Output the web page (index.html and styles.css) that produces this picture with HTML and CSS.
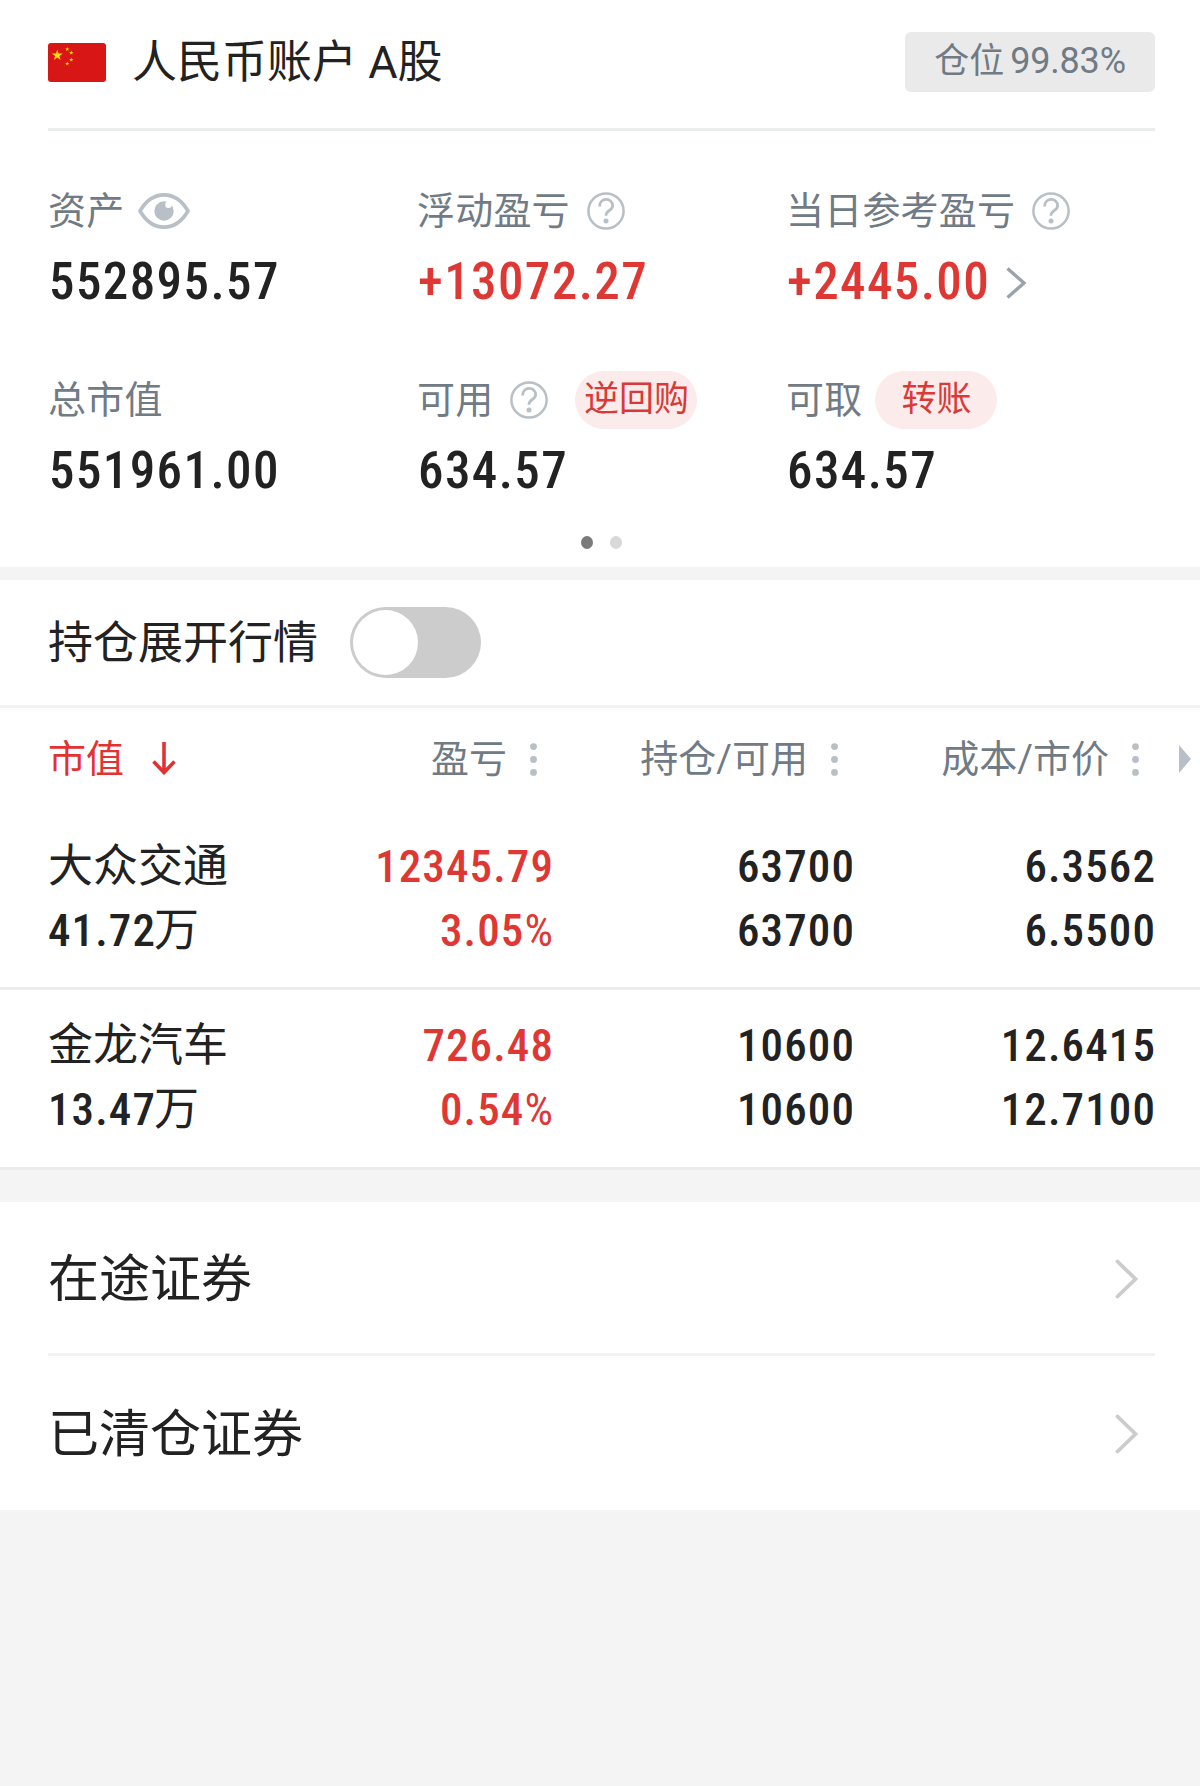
FILE: index.html
```html
<!DOCTYPE html>
<html lang="zh-CN">

<head>
    <meta charset="UTF-8">
    <meta name="viewport" content="width=device-width, initial-scale=1.0">
    <title>持仓</title>
    <link rel="stylesheet" href="styles.css">
</head>

<body>
    <!-- 图标 -->
    <svg class="sprite" width="0" height="0">
        <symbol id="help" viewBox="0 0 38 38">
            <circle cx="19" cy="19" r="17.6" fill="none" stroke="currentColor" stroke-width="2.5" />
            <path d="M12.6 14.5 C12.6 5.2 25.6 5.2 25.6 13.8 C25.6 19 19 17.5 19 23.8" fill="none" stroke="currentColor" stroke-width="2.8" />
            <circle cx="19" cy="29" r="2.5" fill="currentColor" />
        </symbol>
        <symbol id="arrow" viewBox="0 0 24 40">
            <path d="M2.5 2.5 L20.5 20 L2.5 37.5" fill="none" stroke="currentColor" stroke-width="3.8" stroke-linecap="round" />
        </symbol>
        <symbol id="more" viewBox="0 0 7 33">
            <circle cx="3.5" cy="3.6" r="3.4" fill="currentColor" />
            <circle cx="3.5" cy="16.5" r="3.4" fill="currentColor" />
            <circle cx="3.5" cy="29.4" r="3.4" fill="currentColor" />
        </symbol>
        <symbol id="star" viewBox="0 0 20 20">
            <path d="M10 0 L12.3 6.9 L19.5 6.9 L13.7 11.2 L15.9 18.1 L10 13.8 L4.1 18.1 L6.3 11.2 L.5 6.9 L7.7 6.9 Z" fill="#ffde00" />
        </symbol>
    </svg>

    <!-- 账户资产 -->
    <section class="account">
        <div class="account-header">
            <svg class="flag" viewBox="0 0 58 39">
                <rect width="58" height="39" rx="3" fill="#d91616" />
                <use href="#star" x="3.5" y="6.5" width="11.5" height="11.5" />
                <use href="#star" x="17" y="4" width="4.5" height="4.5" />
                <use href="#star" x="21" y="7.5" width="4.5" height="4.5" />
                <use href="#star" x="21" y="14.5" width="4.5" height="4.5" />
                <use href="#star" x="17" y="18.5" width="4.5" height="4.5" />
            </svg>
            <h1>人民币账户 A股</h1>
            <span class="position">仓位<span class="percent">99.83%</span></span>
        </div>

        <div class="assets">
            <div class="asset">
                <div class="label">资产
                    <svg class="eye" viewBox="0 0 52 36">
                        <path d="M2 18 C14.5 -3.5 37.5 -3.5 50 18 C37.5 39.5 14.5 39.5 2 18 Z" fill="none" stroke="currentColor" stroke-width="3.6" stroke-linejoin="round" />
                        <circle cx="26" cy="18" r="9.7" fill="currentColor" />
                        <circle cx="30.5" cy="11.8" r="3.3" fill="#fff" />
                    </svg>
                </div>
                <div class="value">552895.57</div>
            </div>
            <div class="asset">
                <div class="label">浮动盈亏<svg class="help"><use href="#help" /></svg></div>
                <div class="value red">+13072.27</div>
            </div>
            <div class="asset">
                <div class="label">当日参考盈亏<svg class="help"><use href="#help" /></svg></div>
                <div class="value red">+2445.00<svg class="detail" viewBox="0 0 21 32"><path d="M1.5 1.5 L18 16 L1.5 30.5" fill="none" stroke="currentColor" stroke-width="3.4" /></svg></div>
            </div>
            <div class="asset">
                <div class="label">总市值</div>
                <div class="value">551961.00</div>
            </div>
            <div class="asset">
                <div class="label">可用<svg class="help"><use href="#help" /></svg><button class="pill repo">逆回购</button></div>
                <div class="value">634.57</div>
            </div>
            <div class="asset">
                <div class="label">可取<button class="pill">转账</button></div>
                <div class="value">634.57</div>
            </div>
        </div>

        <div class="dots">
            <span class="dot active"></span>
            <span class="dot"></span>
        </div>
    </section>

    <!-- 持仓列表 -->
    <section class="holdings">
        <div class="expand">
            <span class="expand-text">持仓展开行情</span>
            <span class="toggle"><span class="knob"></span></span>
        </div>

        <div class="row head">
            <div class="sorted">市值
                <svg class="down" viewBox="0 0 24 33">
                    <path d="M12 0 V30 M1.5 19.5 L12 30.5 L22.5 19.5" fill="none" stroke="currentColor" stroke-width="3.6" />
                </svg>
            </div>
            <div>盈亏<svg class="more"><use href="#more" /></svg></div>
            <div>持仓/可用<svg class="more"><use href="#more" /></svg></div>
            <div>成本/市价<svg class="more"><use href="#more" /></svg></div>
            <svg class="next" viewBox="0 0 12 28"><path d="M0 0 L12 14 L0 28 Z" fill="currentColor" /></svg>
        </div>

        <div class="row">
            <div class="name">大众交通<br><span class="num">41.72</span>万</div>
            <div class="num red">12345.79<br>3.05<span class="sign">%</span></div>
            <div class="num">63700<br>63700</div>
            <div class="num">6.3562<br>6.5500</div>
        </div>
        <div class="row last">
            <div class="name">金龙汽车<br><span class="num">13.47</span>万</div>
            <div class="num red">726.48<br>0.54<span class="sign">%</span></div>
            <div class="num">10600<br>10600</div>
            <div class="num">12.6415<br>12.7100</div>
        </div>
    </section>

    <!-- 更多 -->
    <section class="links">
        <a class="link" href="#"><span>在途证券</span><svg class="go"><use href="#arrow" /></svg></a>
        <a class="link" href="#"><span>已清仓证券</span><svg class="go"><use href="#arrow" /></svg></a>
    </section>
</body>

</html>
```
FILE: styles.css
```css
* {
    box-sizing: border-box;
}

body {
    margin: 0;
    background-color: #f4f4f4;
    color: #222;
    font-family: Roboto, "Noto Sans CJK SC", sans-serif;
    font-size: 45px;
}

svg {
    display: block;
    flex: none;
}

.sprite {
    position: absolute;
}

.red {
    color: #de3734;
}

.account {
    height: 567px;
    background-color: #fff;
}

.account-header {
    display: flex;
    align-items: center;
    height: 131px;
    margin: 0 45px 0 48px;
    padding: 32px 0 36px;
    border-bottom: 3px solid #ebeded;
}

.flag {
    width: 58px;
    height: 39px;
}

h1 {
    margin: 0 auto 0 26px;
    padding-top: 1px;
    font-size: 45px;
    font-weight: 400;
    line-height: 60px;
}

.position {
    display: flex;
    justify-content: center;
    gap: 6px;
    width: 250px;
    height: 60px;
    border-radius: 6px;
    background-color: #eaeaea;
    color: #707b85;
    font-size: 35px;
    line-height: 60px;
}

.percent {
    font-size: 36px;
    letter-spacing: -.2px;
    line-height: 58px;
}

.assets {
    display: grid;
    grid-template-columns: repeat(3, 369px);
    row-gap: 48px;
    padding: 51px 0 0 48px;
}

.label {
    display: flex;
    align-items: center;
    height: 58px;
    color: #707b85;
    font-size: 38px;
    letter-spacing: .2px;
    line-height: 56px;
}

.value {
    display: flex;
    align-items: center;
    height: 83px;
    padding-left: 1px;
    font-size: 51px;
    font-weight: 500;
    font-stretch: 75%;
    letter-spacing: 1.4px;
    line-height: 83px;
}

.eye {
    width: 52px;
    height: 36px;
    margin-left: 14px;
    color: #b8bfc6;
}

.help {
    width: 38px;
    height: 38px;
    margin-left: 17px;
    color: #b8bfc6;
}

.detail {
    width: 21px;
    height: 32px;
    margin: 3px 0 0 16px;
    color: #9aa3ab;
}

.pill {
    width: 122px;
    height: 58px;
    margin-left: 13px;
    padding: 0;
    border: none;
    border-radius: 29px;
    background-color: #fcebeb;
    color: #d93a38;
    font-family: inherit;
    font-size: 35px;
    line-height: 56px;
}

.repo {
    margin-left: 27px;
}

.dots {
    display: flex;
    justify-content: center;
    gap: 17px;
    margin-top: 24px;
    padding-left: 3px;
}

.dot {
    width: 12px;
    height: 13px;
    border-radius: 50%;
    background-color: #d8d8d8;
}

.dot.active {
    background-color: #7a7a7a;
}

.holdings {
    margin-top: 13px;
    background-color: #fff;
}

.expand {
    display: flex;
    align-items: center;
    gap: 32px;
    height: 128px;
    padding-left: 48px;
    border-bottom: 3px solid #f2f2f2;
}

.expand-text {
    padding-bottom: 6px;
}

.toggle {
    width: 131px;
    height: 71px;
    padding: 3px;
    border-radius: 36px;
    background-color: #ccc;
}

.knob {
    display: block;
    width: 65px;
    height: 65px;
    border-radius: 50%;
    background-color: #fff;
}

.row {
    display: grid;
    grid-template-columns: 203px repeat(3, 301px) 37px;
    height: 180px;
    padding: 25px 0 0 48px;
    border-bottom: 3px solid #ebecec;
    line-height: 64px;
    text-align: right;
}

.row.last {
    padding-top: 24px;
}

.row .name {
    text-align: left;
    white-space: nowrap;
}

.num {
    margin-right: -2px;
    font-weight: 500;
    font-stretch: 75%;
    letter-spacing: 1.1px;
}

.name .num {
    margin-right: -2px;
}

.sign {
    font-weight: 400;
}

.head {
    height: 102px;
    padding-top: 0;
    padding-bottom: 1px;
    border-bottom: none;
    color: #707b85;
    font-size: 38px;
    align-items: center;
}

.head div {
    display: flex;
    align-items: center;
    justify-content: flex-end;
}

.head .sorted {
    justify-content: flex-start;
    color: #e23232;
}

.down {
    width: 24px;
    height: 33px;
    margin-left: 28px;
}

.more {
    width: 7px;
    height: 33px;
    margin: 1px 15px 0 23px;
    color: #b8bfc6;
}

.next {
    width: 12px;
    height: 28px;
    margin-left: 25px;
    color: #b8bfc6;
}

.links {
    margin-top: 32px;
    padding: 0 45px 0 48px;
    background-color: #fff;
}

.link {
    display: flex;
    align-items: center;
    justify-content: space-between;
    height: 154px;
    padding-bottom: 1px;
    color: #222;
    font-size: 51px;
    text-decoration: none;
}

.link span {
    padding-bottom: 5px;
}

.link:first-child {
    padding-bottom: 0;
    border-bottom: 3px solid #f2f2f2;
}

.go {
    width: 24px;
    height: 40px;
    margin: 3px 16px 0 0;
    color: #ccc;
}
```
